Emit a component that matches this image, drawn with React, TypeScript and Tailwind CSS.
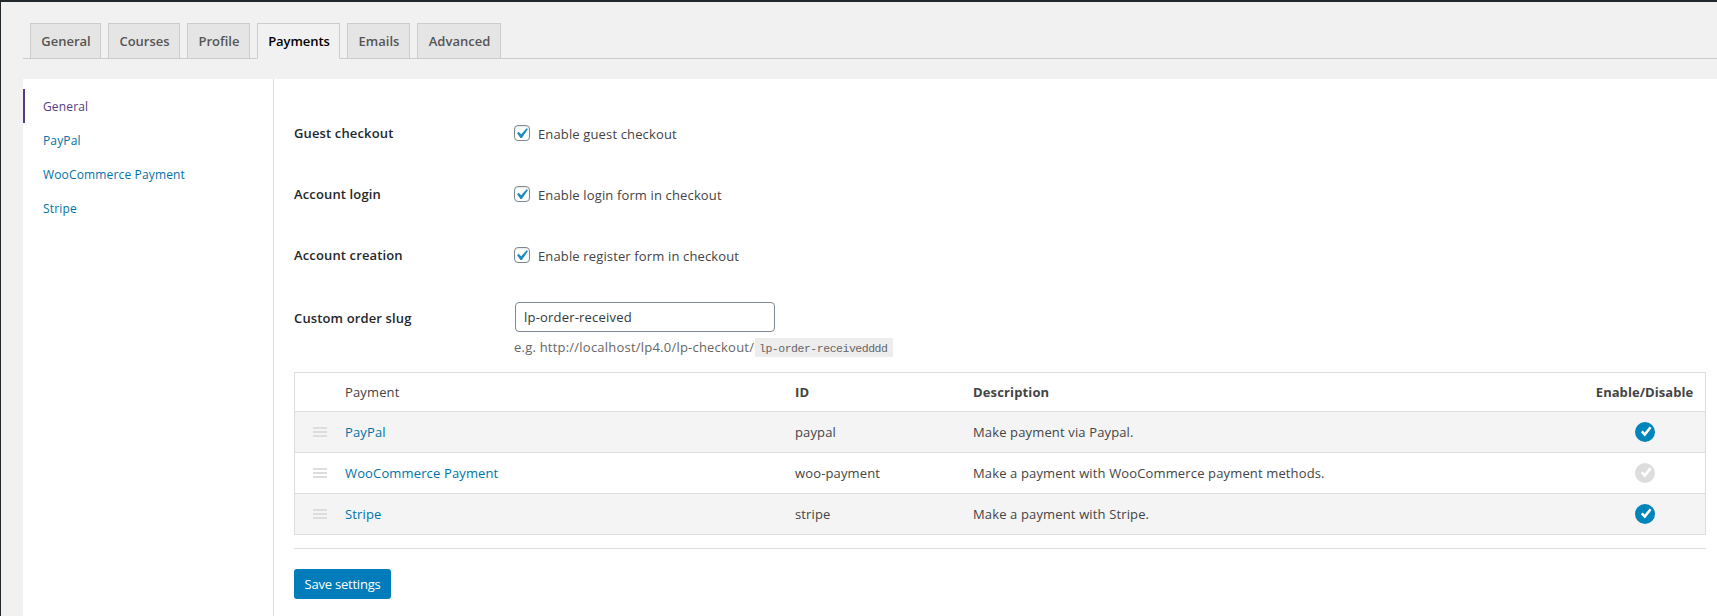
import type { ReactNode } from "react";

const tabs = [
  { label: "General", width: "w-[71px]" },
  { label: "Courses", width: "w-[72px]" },
  { label: "Profile", width: "w-[63px]" },
  { label: "Payments", width: "w-[83px]", active: true },
  { label: "Emails", width: "w-[63px]" },
  { label: "Advanced", width: "w-[84px]" },
];

const sections = [
  { label: "General", active: true },
  { label: "PayPal" },
  { label: "WooCommerce Payment" },
  { label: "Stripe" },
];

const options = [
  { title: "Guest checkout", label: "Enable guest checkout" },
  { title: "Account login", label: "Enable login form in checkout" },
  { title: "Account creation", label: "Enable register form in checkout" },
];

const payments = [
  { name: "PayPal", id: "paypal", description: "Make payment via Paypal.", enabled: true },
  { name: "WooCommerce Payment", id: "woo-payment", description: "Make a payment with WooCommerce payment methods.", enabled: false },
  { name: "Stripe", id: "stripe", description: "Make a payment with Stripe.", enabled: true },
];

const rowGrid = "grid grid-cols-[50px_450px_178px_1fr_121px] items-center";

function Checkbox() {
  return (
    <span className="flex h-4 w-4 shrink-0 items-start justify-start rounded-[4px] border border-[#7e8993] bg-white shadow-[inset_0_1px_2px_rgba(0,0,0,0.1)]">
      <svg viewBox="0 0 20 20" className="-mt-[3px] -ml-1 h-[21px] w-[21px] shrink-0" fill="#1e8cbe">
        <path d="M14.83 4.89l1.34.94-5.81 8.38H9.02L5.78 9.67l1.34-1.25 2.57 2.4z" />
      </svg>
    </span>
  );
}

function Status({ enabled }: { enabled: boolean }) {
  return (
    <svg viewBox="0 0 20 20" className="h-5 w-5">
      <circle cx="10" cy="10" r="10" fill={enabled ? "#0085ba" : "#dddddd"} />
      <path d="M6.8 9.4l3 3.2 5.8-7.4" fill="none" stroke="#fff" strokeWidth="2.6" />
    </svg>
  );
}

function Handle() {
  return (
    <span className="ml-[18px] flex w-[14px] flex-col gap-[2px]">
      <span className="h-[2px] bg-[#dddddd]" />
      <span className="h-[2px] bg-[#dddddd]" />
      <span className="h-[2px] bg-[#dddddd]" />
    </span>
  );
}

function Title({ children }: { children: ReactNode }) {
  return <div className="w-[220px] text-[13px] font-semibold text-[#23282d]">{children}</div>;
}

export default function App() {
  return (
    <div className="flex h-[616px] w-[1717px] flex-col overflow-hidden border-t-2 border-l border-t-[#23282d] border-l-[#23282d] bg-[#f1f1f1] pl-[22px] font-['Open_Sans','Noto_Sans',sans-serif] text-[13px] leading-5 text-[#444444]">
      <nav className="mt-[21px] flex h-9 shrink-0 items-start gap-[7px] border-b border-[#cccccc] pl-[7px]">
        {tabs.map((tab) => (
          <a
            key={tab.label}
            className={`flex h-9 justify-center border border-[#cccccc] pt-[7px] pl-px font-semibold whitespace-nowrap ${tab.width} ${
              tab.active ? "border-b-[#f1f1f1] bg-[#f1f1f1] tracking-[-0.05px] text-black" : "bg-[#e5e5e5] text-[#555555]"
            }`}
          >
            {tab.label}
          </a>
        ))}
      </nav>
      <div className="mt-5 flex flex-1 bg-white">
        <aside className="w-[251px] shrink-0 border-r border-[#dddddd] pt-[10px] text-[12px] tracking-[0.15px]">
          {sections.map((section) => (
            <a
              key={section.label}
              className={`flex h-[34px] items-center border-l-2 pt-[2px] pl-[18px] ${
                section.active ? "border-[#533c7f] text-[#533c7f]" : "border-transparent text-[#0073aa]"
              }`}
            >
              {section.label}
            </a>
          ))}
        </aside>
        <main className="flex-1 pt-[23px] pr-[11px] pl-5 tracking-[0.14px]">
          {options.map((option) => (
            <div key={option.title} className="flex h-[61px] items-center">
              <Title>{option.title}</Title>
              <Checkbox />
              <span className="mt-[2px] ml-2">{option.label}</span>
            </div>
          ))}
          <div className="mt-[17px] flex h-[70px]">
            <div className="pt-[6px]">
              <Title>Custom order slug</Title>
            </div>
            <div>
              <input
                readOnly
                value="lp-order-received"
                className="ml-px block h-[30px] w-[260px] rounded-[4px] border border-[#7e8993] bg-white px-2 text-[13px] tracking-[0.2px] text-[#32373c]"
              />
              <p className="mt-[6px] flex h-[19px] items-center text-[#666666]">
                <span className="w-[241px] pb-px tracking-[0.22px] whitespace-nowrap">e.g. http://localhost/lp4.0/lp-checkout/</span>
                <code className="flex h-[19px] w-[138px] items-center bg-[#ededed] pt-[2px] pl-1 font-['Liberation_Mono',monospace] text-[11.5px] tracking-[-0.48px]">
                  lp-order-receivedddd
                </code>
              </p>
            </div>
          </div>
          <div className="border border-[#dddddd]">
            <div className={`h-[38px] ${rowGrid}`}>
              <span />
              <span>Payment</span>
              <span className="font-bold">ID</span>
              <span className="font-bold">Description</span>
              <span className="text-center font-bold tracking-[0.05px]">Enable/Disable</span>
            </div>
            {payments.map((payment) => (
              <div key={payment.id} className={`h-[41px] border-t border-[#dddddd] odd:bg-white even:bg-[#f4f4f4] ${rowGrid}`}>
                <Handle />
                <a className="text-[#0073aa]">{payment.name}</a>
                <span>{payment.id}</span>
                <span>{payment.description}</span>
                <span className="flex justify-center">
                  <Status enabled={payment.enabled} />
                </span>
              </div>
            ))}
          </div>
          <div className="mt-[13px] border-t border-[#dddddd]" />
          <button className="mt-5 h-[30px] w-[97px] rounded-[3px] bg-[#007cba] text-[13px] tracking-[-0.22px] whitespace-nowrap text-white">
            Save settings
          </button>
        </main>
      </div>
    </div>
  );
}
